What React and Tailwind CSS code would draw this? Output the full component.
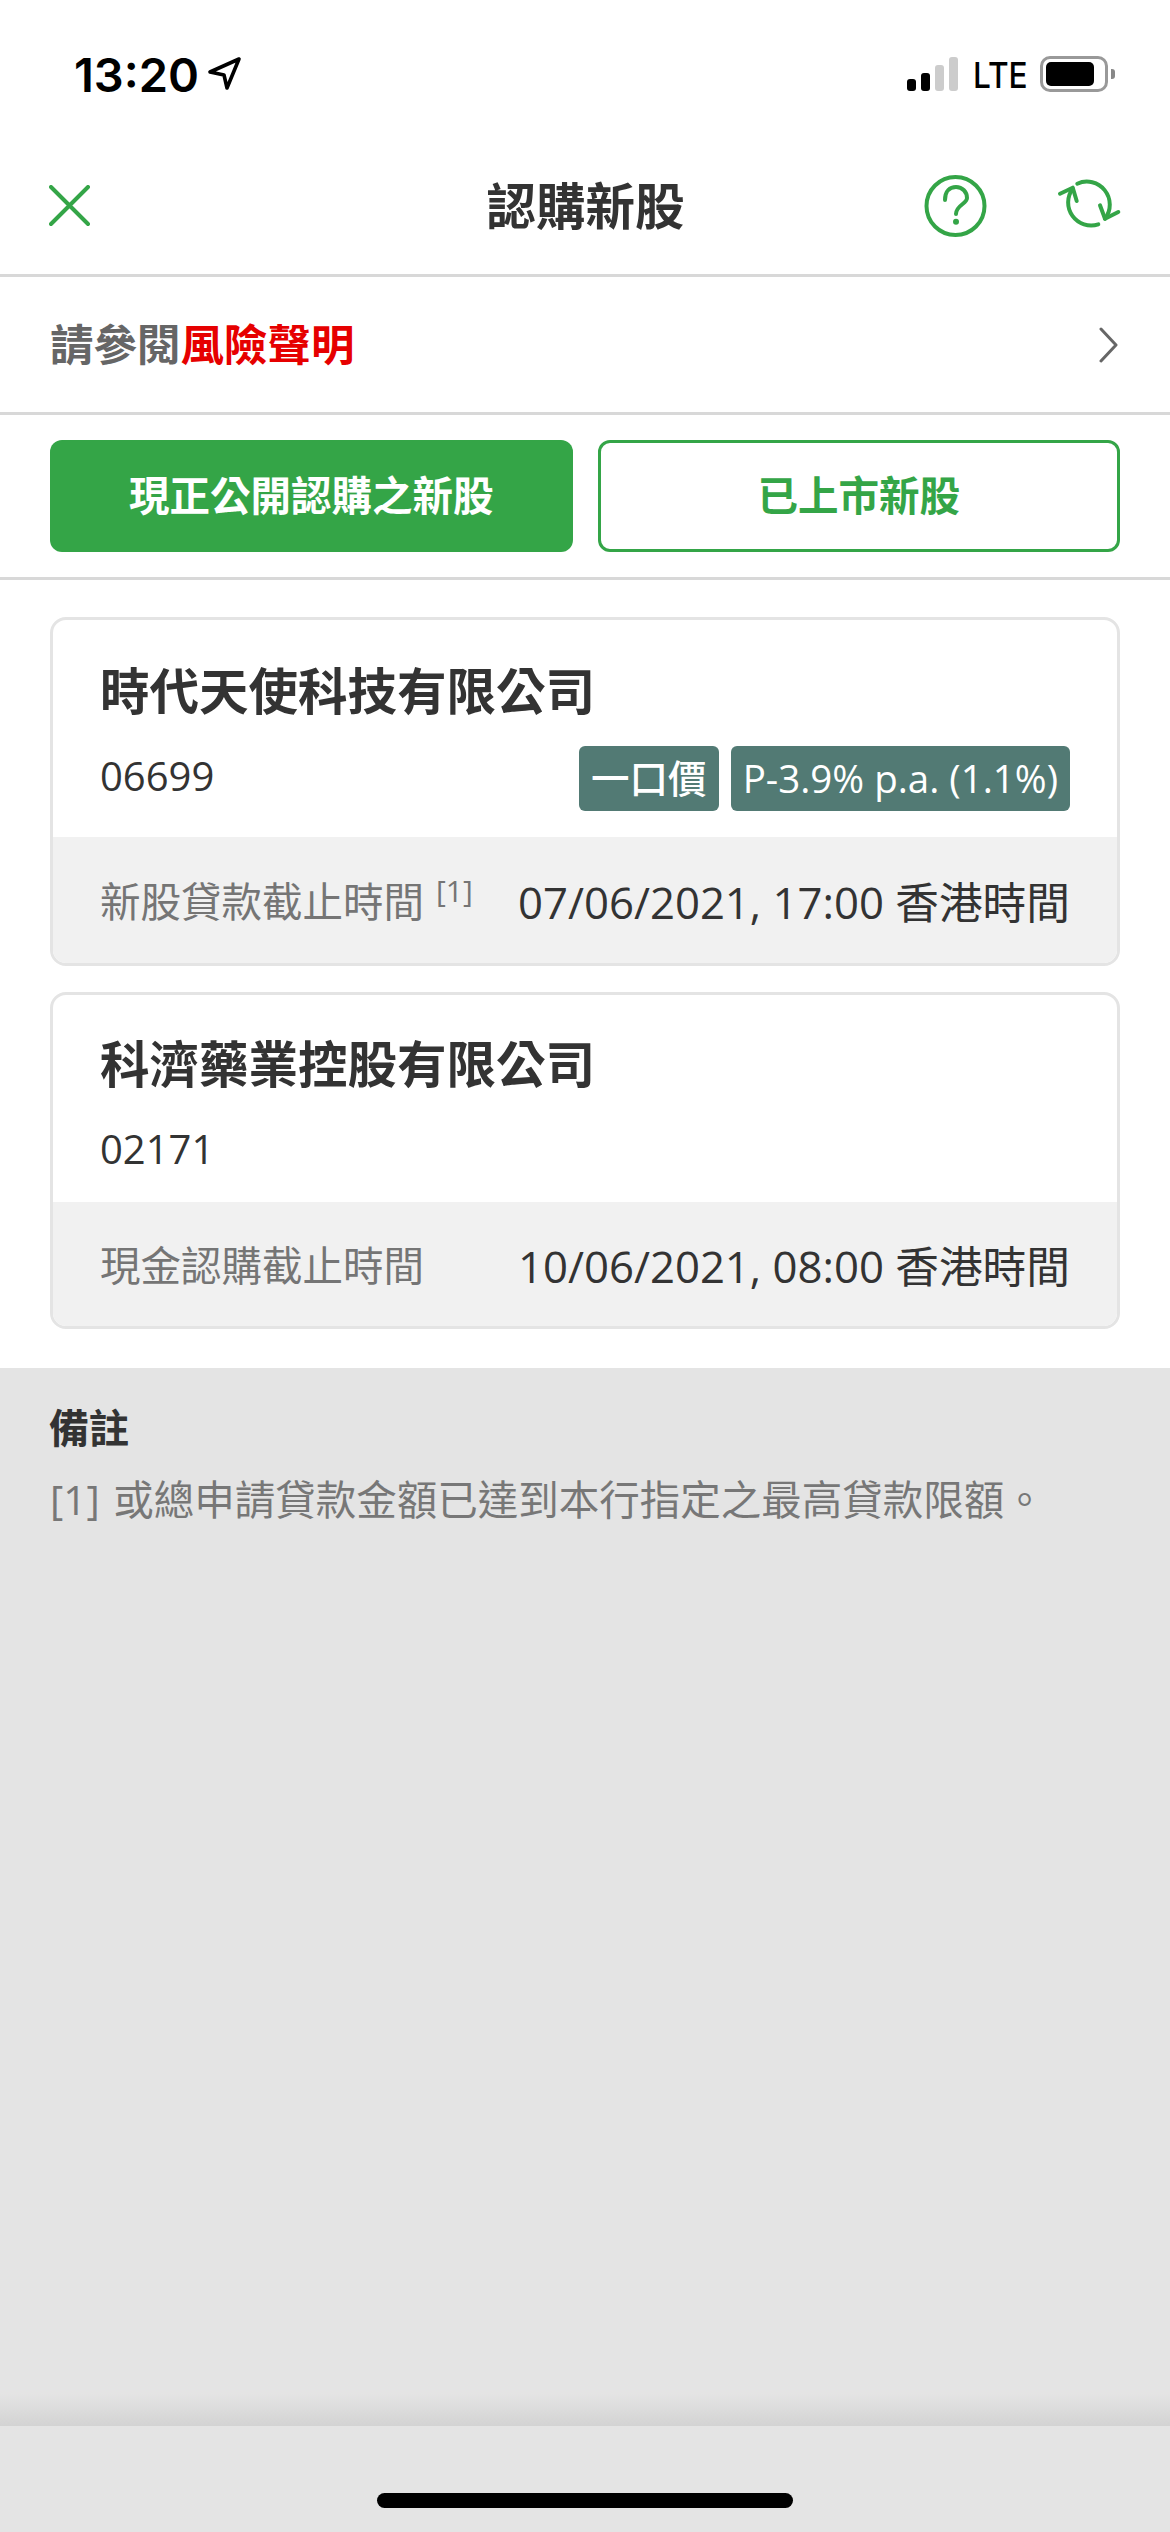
// IPO subscription screen
import React from 'react';

const CJK = "font-['Open_Sans','Noto_Sans_CJK_TC',sans-serif]";

const CloseIcon = () => (
  <svg width="42" height="42" viewBox="0 0 42 42" fill="none" stroke="#34a547" strokeWidth="4" strokeLinecap="round">
    <path d="M2 2L39 39M39 2L2 39" />
  </svg>
);

const HelpIcon = () => (
  <svg width="64" height="64" viewBox="0 0 64 64" fill="none" stroke="#34a547" strokeWidth="4" strokeLinecap="round">
    <circle cx="32.5" cy="32" r="29" />
    <path d="M22 26C22 17 27 13 33 13C39.5 13 44 18 44 24C44 30 33 31 33 40" />
    <circle cx="33" cy="47.7" r="3" fill="#34a547" stroke="none" />
  </svg>
);

const RefreshIcon = () => (
  <svg width="66" height="56" viewBox="0 0 66 56" fill="none" stroke="#34a547" strokeWidth="4" strokeLinecap="round" strokeLinejoin="round">
    <path d="M21.3 5.7A23 23 0 0 1 49 40.7" />
    <path d="M44 27.3L49 40.7L62.3 34" />
    <path d="M42.3 46.3A23 23 0 0 1 16.7 10.7" />
    <path d="M4 15.7L16.7 9.7L20.7 23" />
  </svg>
);

const LocationIcon = () => (
  <svg width="36" height="36" viewBox="0 0 36 36" fill="none" stroke="#000" strokeWidth="3.6" strokeLinejoin="round">
    <path d="M32 3L3 16L17 19L20 32Z" />
  </svg>
);

const ChevronIcon = () => (
  <svg width="22" height="36" viewBox="0 0 22 36" fill="none" stroke="#666" strokeWidth="3" strokeLinecap="round" strokeLinejoin="round">
    <path d="M3 2L18 18L3 34" />
  </svg>
);

const StatusBar = () => (
  <div className="h-[138px] pt-[46px] pl-[74px] pr-[55px] flex items-start justify-between">
    <div className="flex items-center gap-[8px] h-[56px]">
      <span className="font-['Inter',sans-serif] font-semibold text-[47px] leading-none text-black">13:20</span>
      <LocationIcon />
    </div>
    <div className="flex items-center h-[56px]">
      <div className="flex items-end gap-[5px] h-[34px]">
        <div className="w-[9px] h-[12px] rounded-[3px] bg-black" />
        <div className="w-[9px] h-[18px] rounded-[3px] bg-black" />
        <div className="w-[9px] h-[26px] rounded-[3px] bg-[#cccccc]" />
        <div className="w-[9px] h-[34px] rounded-[3px] bg-[#cccccc]" />
      </div>
      <span className="ml-[15px] w-[52px] pt-[2px] origin-left scale-x-[0.88] font-['Inter',sans-serif] font-medium text-[36px] leading-none text-black">LTE</span>
      <div className="ml-[15px] w-[68px] h-[36px] rounded-[10px] border-[3px] border-[#999999] p-[3px] pr-[11px]">
        <div className="w-full h-full rounded-[5px] bg-black" />
      </div>
      <div className="ml-[3px] w-[4px] h-[10px] rounded-r-[3px] bg-[#888888]" />
    </div>
  </div>
);

const Card = ({ name, code, badges, label, sup, time, topClass, footClass }) => (
  <div className="rounded-[16px] border-[3px] border-[#e4e4e4] overflow-hidden bg-white">
    <div className={`px-[47px] ${topClass}`}>
      <div className="text-[49.5px] leading-[70px] font-bold text-[#333333]">{name}</div>
      <div className="mt-[20px] flex items-center justify-between h-[65px]">
        <span className="mb-[6px] text-[40px] leading-none text-[#333333]">{code}</span>
        {badges && (
          <div className="flex gap-[12px]">
            {badges.map((b) => (
              <span key={b} className="h-[65px] px-[12px] flex items-center rounded-[6px] bg-[#527a74] text-white text-[38.5px] font-medium">{b}</span>
            ))}
          </div>
        )}
      </div>
    </div>
    <div className={`bg-[#f1f1f1] px-[47px] pt-[4px] flex items-center justify-between ${footClass}`}>
      <div className="flex items-start text-[40.5px] leading-[54px] text-[#757575]">
        {label}
        {sup && <span className="ml-[12px] text-[30px] leading-[32px]">[1]</span>}
      </div>
      <div className="text-[43.7px] leading-[54px] text-[#333333]">{time}</div>
    </div>
  </div>
);

export default function App() {
  return (
    <div className={`w-[1170px] h-[2532px] flex flex-col bg-white ${CJK}`}>
      <StatusBar />
      <div className="h-[136px] pl-[49px] pr-[48px] flex items-center border-b-[3px] border-[#d8d8d8] box-content">
        <div className="flex-1">
          <CloseIcon />
        </div>
        <div className="text-[49.5px] font-bold text-[#333333]">認購新股</div>
        <div className="flex-1 flex items-center justify-end gap-[69px]">
          <HelpIcon />
          <RefreshIcon />
        </div>
      </div>

      <div className="h-[135px] px-[50px] flex items-center justify-between border-b-[3px] border-[#d8d8d8] box-content">
        <div className="text-[43.5px] font-bold text-[#666666]">
          請參閱<span className="text-[#e60000]">風險聲明</span>
        </div>
        <ChevronIcon />
      </div>

      <div className="px-[50px] py-[25px] grid grid-cols-2 gap-[25px] border-b-[3px] border-[#d8d8d8] box-content">
        <div className="h-[112px] rounded-[12px] bg-[#34a547] flex items-center justify-center text-[40.5px] font-bold text-white">現正公開認購之新股</div>
        <div className="h-[112px] rounded-[12px] border-[3px] border-[#34a547] flex items-center justify-center text-[40.5px] font-bold text-[#34a547]">已上市新股</div>
      </div>

      <div className="px-[50px] pt-[37px] pb-[39px] flex flex-col gap-[26px]">
        <Card name="時代天使科技有限公司" code="06699" badges={['一口價', 'P-3.9% p.a. (1.1%)']} label="新股貸款截止時間" sup time="07/06/2021, 17:00 香港時間" topClass="h-[217px] pt-[36px]" footClass="h-[126px]" />
        <Card name="科濟藥業控股有限公司" code="02171" label="現金認購截止時間" time="10/06/2021, 08:00 香港時間" topClass="h-[207px] pt-[34px]" footClass="h-[124px]" />
      </div>

      <div className="flex-1 bg-[#e4e4e4] flex flex-col">
        <div className="pl-[49px] pr-[50px] pt-[33px]">
          <div className="text-[40px] leading-[54px] font-bold text-[#333333]">備註</div>
          <div className="mt-[17px] ml-[1px] text-[40.5px] leading-[56px] text-[#777777]">
            <span className="mr-[3px]">[1]</span> 或總申請貸款金額已達到本行指定之最高貸款限額。
          </div>
        </div>
        <div className="mt-auto h-[32px] bg-gradient-to-b from-[#e4e4e4] to-[#d3d3d3]" />
        <div className="h-[106px] pt-[67px] flex justify-center">
          <div className="w-[416px] h-[15px] rounded-full bg-black" />
        </div>
      </div>
    </div>
  );
}
